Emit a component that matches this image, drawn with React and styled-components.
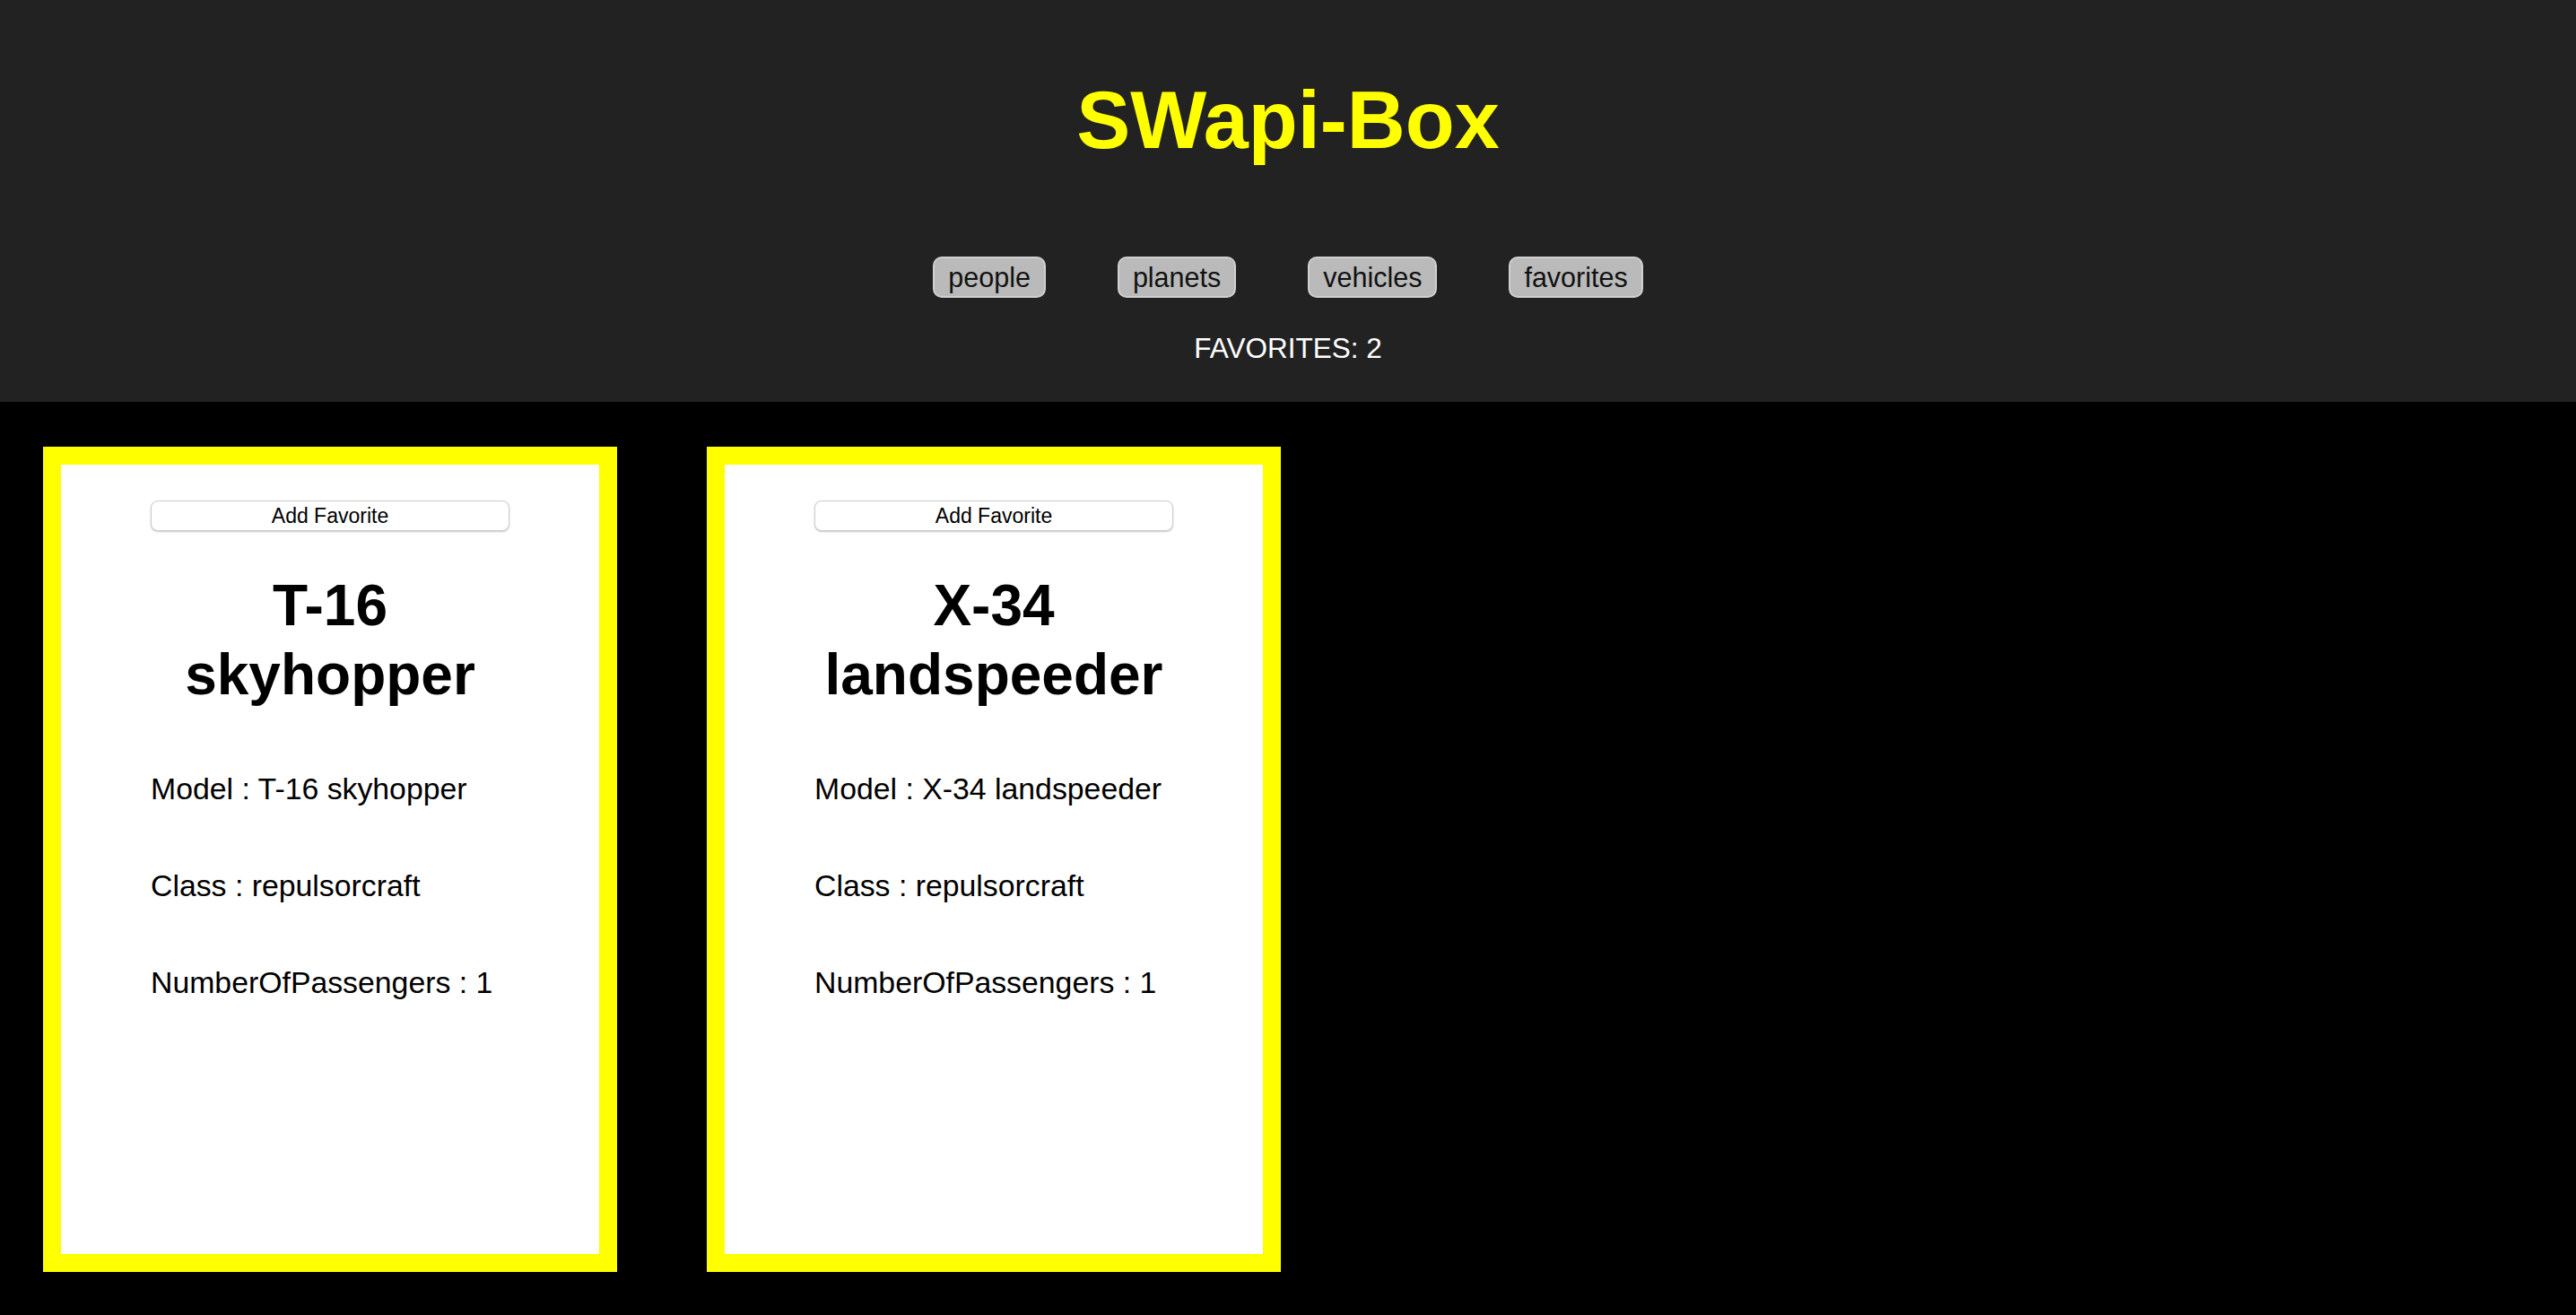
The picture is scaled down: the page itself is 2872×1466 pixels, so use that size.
import React from "react";
import styled, { createGlobalStyle } from "styled-components";

const GlobalStyle = createGlobalStyle`
  html, body {
    margin: 0;
    padding: 0;
    background: #000000;
  }
  body {
    font-family: "Liberation Sans", Arial, Helvetica, sans-serif;
  }
  * {
    box-sizing: border-box;
  }
`;

const Page = styled.div`
  min-height: 100vh;
  background: #000000;
`;

const Header = styled.header`
  background: #222222;
  padding: 84px 0 41px;
  display: flex;
  flex-direction: column;
  align-items: center;
`;

const Title = styled.h1`
  margin: 0;
  font-size: 90px;
  line-height: 100px;
  font-weight: 700;
  color: #ffff00;
`;

const Nav = styled.nav`
  display: flex;
  gap: 80px;
  margin-top: 102px;
`;

const NavButton = styled.button`
  height: 46px;
  padding: 0 15px;
  font-family: "Liberation Sans", Arial, sans-serif;
  font-size: 30.5px;
  line-height: 34px;
  color: #111111;
  background: #bababa;
  border: 2px solid #d0d0d0;
  border-radius: 10px;
  cursor: pointer;
`;

const Count = styled.p`
  margin: 38px 0 0;
  font-size: 31.5px;
  line-height: 37px;
  color: #ffffff;
`;

const CardGrid = styled.main`
  display: flex;
  align-items: flex-start;
  gap: 100px;
  padding: 50px 48px 0;
`;

const Card = styled.article`
  width: 640px;
  height: 920px;
  border: 20px solid #ffff00;
  background: #ffffff;
  padding: 40px 100px 0;
  display: flex;
  flex-direction: column;
`;

const FavButton = styled.button`
  width: 100%;
  height: 34px;
  background: #ffffff;
  border: 1px solid #cdcdcd;
  border-radius: 8px;
  box-shadow: 0 1px 2px rgba(0, 0, 0, 0.22);
  font-family: "Liberation Sans", Arial, sans-serif;
  font-size: 23px;
  line-height: 30px;
  color: #000000;
  cursor: pointer;
`;

const Name = styled.h2`
  margin: 45px 0 0;
  font-size: 64px;
  line-height: 76.5px;
  font-weight: 700;
  text-align: center;
  color: #000000;
`;

const Spec = styled.p`
  margin: 70px 0 0;
  font-size: 33.8px;
  line-height: 38px;
  color: #000000;
`;

const vehicles = [
  {
    name: "T-16 skyhopper",
    model: "T-16 skyhopper",
    vehicleClass: "repulsorcraft",
    passengers: "1",
  },
  {
    name: "X-34 landspeeder",
    model: "X-34 landspeeder",
    vehicleClass: "repulsorcraft",
    passengers: "1",
  },
];

const categories = ["people", "planets", "vehicles", "favorites"];

export default function App() {
  return (
    <Page>
      <GlobalStyle />
      <Header>
        <Title>SWapi-Box</Title>
        <Nav>
          {categories.map((c) => (
            <NavButton key={c}>{c}</NavButton>
          ))}
        </Nav>
        <Count>FAVORITES: 2</Count>
      </Header>
      <CardGrid>
        {vehicles.map((v) => (
          <Card key={v.name}>
            <FavButton>Add Favorite</FavButton>
            <Name>{v.name}</Name>
            <Spec>Model : {v.model}</Spec>
            <Spec>Class : {v.vehicleClass}</Spec>
            <Spec>NumberOfPassengers : {v.passengers}</Spec>
          </Card>
        ))}
      </CardGrid>
    </Page>
  );
}
